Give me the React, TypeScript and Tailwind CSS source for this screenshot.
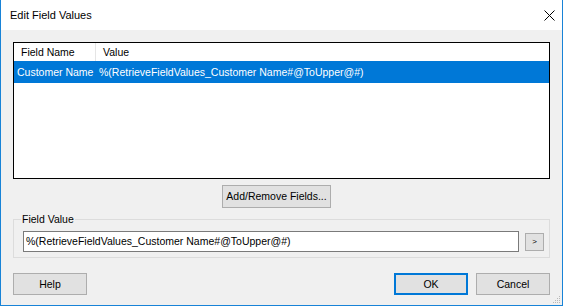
import React from 'react'

// Classic WinForms "Edit Field Values" dialog
const value = '%(RetrieveFieldValues_Customer Name#@ToUpper@#)'

function WinButton({ label, primary, className }: { label: string; primary?: boolean; className?: string }) {
  return (
    <button
      className={`flex items-center justify-center bg-[#e1e1e1] text-black ${
        primary ? 'border-2 border-[#0078d7]' : 'border border-[#adadad]'
      } ${className ?? ''}`}
    >
      {label}
    </button>
  )
}

export default function App() {
  return (
    <div className="relative flex h-[306px] w-[563px] flex-col border-x border-b border-[#1883d7] bg-[#f0f0f0] font-['Liberation_Sans',Arial,sans-serif] text-[10.5px] leading-none text-black">
      {/* title bar */}
      <div className="flex h-[30px] items-center bg-white pl-[9px]">
        <span className="text-[11px] text-[#000]">Edit Field Values</span>
        <svg className="ml-auto mr-[7px]" width="11" height="11" viewBox="0 0 11 11">
          <path d="M0.5 0.5 L10.5 10.5 M10.5 0.5 L0.5 10.5" stroke="#000" strokeWidth="1" />
        </svg>
      </div>

      <div className="flex flex-1 flex-col px-[12px] pt-[12px]">
        {/* list view */}
        <div className="flex h-[137px] flex-col border border-black bg-white">
          <div className="flex h-[18px] items-center">
            <div className="w-[81px] pl-[7px]">Field Name</div>
            <div className="flex h-full items-center border-l border-[#e5e5e5] pl-[7px]">Value</div>
          </div>
          <div className="flex h-[22px] items-center bg-[#0078d7] text-white">
            <div className="w-[85px] pl-[3px]">Customer Name</div>
            <div>{value}</div>
          </div>
        </div>

        <WinButton label="Add/Remove Fields..." className="ml-[209px] mt-[6px] h-[23px] w-[109px]" />

        {/* group box */}
        <fieldset className="mt-[5px] border border-[#dcdcdc] pb-[5px] pl-[9px] pr-[5px]">
          <legend className="-ml-[2px] px-[1px] leading-[13px]">Field Value</legend>
          <div className="mt-[5px] flex items-center gap-[6px]">
            <div className="flex h-[21px] w-[496px] items-center border border-[#7a7a7a] bg-white pl-[2px]">
              {value}
            </div>
            <button className="flex h-[18px] w-[19px] items-center justify-center border border-[#adadad] bg-[#e1e1e1] text-[8px]">
              &gt;
            </button>
          </div>
        </fieldset>

        {/* footer buttons */}
        <div className="mt-[15px] flex h-[22px] items-stretch">
          <WinButton label="Help" className="w-[74px]" />
          <WinButton label="OK" primary className="ml-auto w-[74px]" />
          <WinButton label="Cancel" className="ml-[8px] w-[74px]" />
        </div>
      </div>

      {/* size grip */}
      <svg className="absolute bottom-[1px] right-[1px]" width="8" height="8" viewBox="0 0 8 8">
        <g fill="#b8b8b8">
          <rect x="6" y="0" width="1" height="1" />
          <rect x="4" y="2" width="1" height="1" />
          <rect x="6" y="2" width="1" height="1" />
          <rect x="2" y="4" width="1" height="1" />
          <rect x="4" y="4" width="1" height="1" />
          <rect x="6" y="4" width="1" height="1" />
          <rect x="0" y="6" width="1" height="1" />
          <rect x="2" y="6" width="1" height="1" />
          <rect x="4" y="6" width="1" height="1" />
          <rect x="6" y="6" width="1" height="1" />
        </g>
      </svg>
    </div>
  )
}
